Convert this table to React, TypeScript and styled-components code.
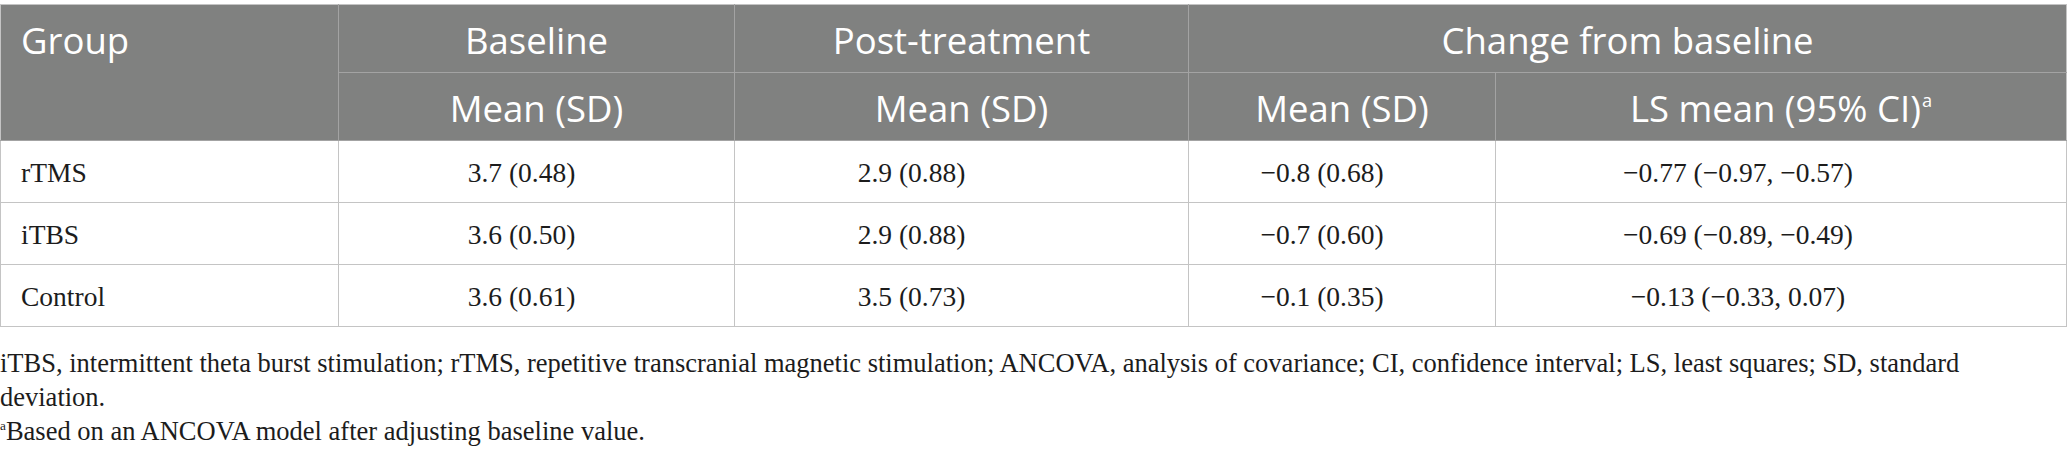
import * as React from 'react'
import styled, { createGlobalStyle } from 'styled-components'

const GlobalStyle = createGlobalStyle`
	html, body {
		margin: 0;
		padding: 0;
		background: #ffffff;
	}
`

const headBg = '#808180'
const headLine = '#a3a3a3'
const bodyLine = '#c4c4c4'

const Page = styled.div`
	display: block;
	width: 2067px;
	padding-top: 4px;
`

const Table = styled.table`
	width: 2066px;
	border-collapse: collapse;
	table-layout: fixed;
	border-top: 1px solid ${bodyLine};
`

const HeadCell = styled.th<{ align?: 'left' | 'center' }>`
	background: ${headBg};
	color: #ffffff;
	font-family: "Open Sans", "Noto Sans", sans-serif;
	font-weight: 400;
	font-size: 36.5px;
	text-align: ${props => props.align || 'center'};
	vertical-align: top;
	padding: 3px 20px 0;
	height: 64px;
	line-height: 64px;
	border: 1px solid ${headLine};
	border-top: none;
	&:first-child { border-left-color: ${bodyLine}; }
	&:last-child { border-right-color: ${bodyLine}; }
`

const Sup = styled.sup`
	font-size: 0.5em;
	line-height: 0;
	vertical-align: 0.85em;
	margin-left: 1px;
`

// body figures sit a little left of the column centre in the source table
const BodyCell = styled.td<{ align?: 'left' | 'center'; shift?: number }>`
	font-family: "Liberation Serif", "Times New Roman", serif;
	font-size: 27.5px;
	color: #1c1c1c;
	text-align: ${props => props.align || 'center'};
	vertical-align: middle;
	padding: 2px ${props => 20 + (props.shift || 0)}px 0 20px;
	height: 59px;
	border: 1px solid ${bodyLine};
`

const Notes = styled.div`
	font-family: "Liberation Serif", "Times New Roman", serif;
	font-size: 26.5px;
	line-height: 34px;
	color: #1c1c1c;
	padding: 19px 0 0 0;
`

const Note = styled.p`
	margin: 0;
`

const NoteMark = styled.sup`
	font-size: 0.5em;
	line-height: 0;
	vertical-align: 0.75em;
`

const shifts = [0, 30, 100, 40, 86]

const rows = [
	['rTMS', '3.7 (0.48)', '2.9 (0.88)', '−0.8 (0.68)', '−0.77 (−0.97, −0.57)'],
	['iTBS', '3.6 (0.50)', '2.9 (0.88)', '−0.7 (0.60)', '−0.69 (−0.89, −0.49)'],
	['Control', '3.6 (0.61)', '3.5 (0.73)', '−0.1 (0.35)', '−0.13 (−0.33, 0.07)'],
]

export default function App() {
	return (
		<Page>
			<GlobalStyle />
			<Table>
				<colgroup>
					<col style={{ width: 338 }} />
					<col style={{ width: 396 }} />
					<col style={{ width: 454 }} />
					<col style={{ width: 307 }} />
					<col style={{ width: 571 }} />
				</colgroup>
				<thead>
					<tr>
						<HeadCell align='left' rowSpan={2}>Group</HeadCell>
						<HeadCell>Baseline</HeadCell>
						<HeadCell>Post-treatment</HeadCell>
						<HeadCell colSpan={2}>Change from baseline</HeadCell>
					</tr>
					<tr>
						<HeadCell>Mean (SD)</HeadCell>
						<HeadCell>Mean (SD)</HeadCell>
						<HeadCell>Mean (SD)</HeadCell>
						<HeadCell>LS mean (95% CI)<Sup>a</Sup></HeadCell>
					</tr>
				</thead>
				<tbody>
					{rows.map(row => (
						<tr key={row[0]}>
							{row.map((cell, i) => (
								<BodyCell key={i} align={i === 0 ? 'left' : 'center'} shift={shifts[i]}>{cell}</BodyCell>
							))}
						</tr>
					))}
				</tbody>
			</Table>
			<Notes>
				<Note>iTBS, intermittent theta burst stimulation; rTMS, repetitive transcranial magnetic stimulation; ANCOVA, analysis of covariance; CI, confidence interval; LS, least squares; SD, standard deviation.</Note>
				<Note><NoteMark>a</NoteMark>Based on an ANCOVA model after adjusting baseline value.</Note>
			</Notes>
		</Page>
	)
}
